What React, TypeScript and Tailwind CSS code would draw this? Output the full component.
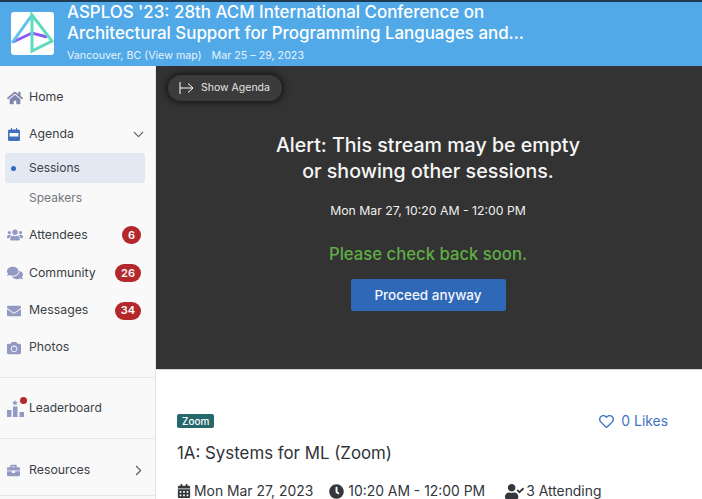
import type { ReactNode } from 'react';
import {
  FaBriefcase,
  FaCalendarAlt,
  FaCamera,
  FaClock,
  FaComments,
  FaEnvelope,
  FaHome,
  FaRegHeart,
  FaUserCheck,
  FaUsers,
} from 'react-icons/fa';
import { ChevronDown, ChevronRight } from 'lucide-react';

const iconColor = 'text-[#929ac4]';

function Logo() {
  return (
    <div className="flex h-[43px] w-[43px] shrink-0 items-center justify-center rounded-[3px] bg-white">
      <svg viewBox="0 0 43 43" className="h-[43px] w-[43px]" fill="none" strokeWidth="3">
        <path d="M2 30 L21 21 L36 25" stroke="#8b5cf6" />
        <path d="M1 31 L21 3" stroke="#5cc4ea" />
        <path d="M21 3 L41 29 L21 39 Z" stroke="#5fdcc0" />
      </svg>
    </div>
  );
}

function AgendaIcon() {
  return (
    <svg viewBox="0 0 12 13" className="h-[13px] w-[12px]">
      <path d="M1.5 1.5 H3 V0 H4 V1.5 H8 V0 H9 V1.5 H10.5 A1.5 1.5 0 0 1 12 3 V11.5 A1.5 1.5 0 0 1 10.5 13 H1.5 A1.5 1.5 0 0 1 0 11.5 V3 A1.5 1.5 0 0 1 1.5 1.5Z" fill="#3f6fbd" />
      <rect x="1.5" y="5" width="9" height="3.5" fill="#f9f9f9" />
    </svg>
  );
}

function NavRow({
  icon,
  label,
  badge,
  right,
  className = 'h-[37px]',
}: {
  icon: ReactNode;
  label: string;
  badge?: string;
  right?: ReactNode;
  className?: string;
}) {
  return (
    <div className={`flex items-center pl-[7px] pr-[14px] ${className}`}>
      <span className={`flex w-[22px] shrink-0 items-center ${iconColor}`}>{icon}</span>
      <span className="text-[12.3px] text-[#3b3f46]">{label}</span>
      <span className="ml-auto flex items-center">
        {badge && (
          <span className="flex h-[18px] min-w-[18px] items-center justify-center rounded-full bg-[#b3292b] px-[6px] text-[11px] font-semibold text-white">
            {badge}
          </span>
        )}
        {right}
      </span>
    </div>
  );
}

function Sidebar() {
  return (
    <aside className="flex w-[156px] shrink-0 flex-col border-r border-[#e6e6e6] bg-[#f9f9f9] pt-[13px]">
      <NavRow icon={<FaHome size={16} className="text-[#7f86ad]" />} label="Home" />
      <NavRow
        icon={<span className="pl-[1px]"><AgendaIcon /></span>}
        label="Agenda"
        right={<ChevronDown size={17} strokeWidth={1.5} className="-mr-[6px] text-[#55585f]" />}
      />
      <div className="ml-[5px] mr-[10px] flex h-[30px] items-center rounded-[3px] bg-[#e2e9f3] pl-[6px]">
        <span className="h-[5px] w-[5px] rounded-full bg-[#3468bb]" />
        <span className="ml-[13px] text-[12px] text-[#3b3f46]">Sessions</span>
      </div>
      <div className="flex h-[33px] items-center pb-[3px] pl-[29px] text-[12px] text-[#74777d]">Speakers</div>
      <NavRow icon={<FaUsers size={16} />} label="Attendees" badge="6" className="h-[38px]" />
      <NavRow icon={<FaComments size={16} />} label="Community" badge="26" className="h-[38px]" />
      <NavRow icon={<FaEnvelope size={14} />} label="Messages" badge="34" />
      <NavRow icon={<FaCamera size={14} />} label="Photos" />
      <div className="mt-[11px] flex h-[62px] items-center border-y border-[#e6e6e6] pl-[7px]">
        <span className="relative mr-[1px] h-[17px] w-[17px] shrink-0">
          <svg viewBox="0 0 17 17" className="h-[17px] w-[17px] fill-[#929ac4]">
            <rect x="0" y="10" width="4.5" height="7" />
            <rect x="6" y="6.5" width="4.5" height="10.5" />
            <rect x="12.5" y="12" width="4.5" height="5" />
            <path d="M8 0 l.9 1.8 1.9 .3 -1.4 1.3 .4 1.9 -1.8-.9 -1.8 .9 .4-1.9 -1.4-1.3 1.9-.3z" />
          </svg>
          <span className="absolute -top-[3px] left-[13px] h-[7px] w-[7px] rounded-full bg-[#b3292b]" />
        </span>
        <span className="ml-[4px] text-[12px] text-[#3b3f46]">Leaderboard</span>
      </div>
      <NavRow
        icon={<FaBriefcase size={13} />}
        label="Resources"
        right={<ChevronRight size={17} strokeWidth={1.5} className="-mr-[6px] text-[#55585f]" />}
        className="h-[57px] border-b border-[#e6e6e6] pt-[6px]"
      />
    </aside>
  );
}

function StreamAlert() {
  return (
    <section className="relative flex h-[303px] shrink-0 flex-col items-center bg-[#333333] pr-[2px] pt-[66px] text-center text-white">
      <button className="absolute left-[12px] top-[9px] flex h-[26px] w-[114px] items-center rounded-full bg-[#3b3b3b] pl-[11px] text-[10.5px] text-[#e4e4e4] shadow-[0_0_6px_2px_rgba(0,0,0,0.55)]">
        <svg viewBox="0 0 15 14" className="mr-[7px] h-[14px] w-[15px]" fill="none" stroke="white" strokeWidth="1">
          <path d="M1 1 V13 M1 7 H14 M9 2.5 L14 7 L9 11.5" />
        </svg>
        Show Agenda
      </button>
      <h2 className="text-[19.6px] font-medium leading-[26px] text-[#f6f6f6]">
        Alert: This stream may be empty
        <br />
        or showing other sessions.
      </h2>
      <p className="mt-[17px] text-[12.25px] leading-[20px] text-[#f0f0f0]">Mon Mar 27, 10:20 AM - 12:00 PM</p>
      <p className="mt-[21px] text-[16.7px] font-medium leading-[24px] text-[#5fae43]">Please check back soon.</p>
      <button className="mt-[13px] h-[32px] w-[155px] rounded-[2px] bg-[#2f68b7] text-[13.5px] font-medium text-[#f2f5fa]">
        Proceed anyway
      </button>
    </section>
  );
}

function SessionDetails() {
  return (
    <section className="flex-1 border-t border-[#d8d8d8] bg-white pl-[21px] pr-[34px] pt-[43px] text-[#33363b]">
      <div className="flex h-[16px] items-center justify-between">
        <span className="rounded-[2px] bg-[#26676b] px-[5px] text-[10px] font-medium leading-[14px] text-white">Zoom</span>
        <span className="flex items-center gap-[7px] text-[13.9px] text-[#3f74c4]">
          <FaRegHeart size={15} />0 Likes
        </span>
      </div>
      <h1 className="mt-[12px] text-[16.85px] leading-[24px] text-[#2f3237]">1A: Systems for ML (Zoom)</h1>
      <div className="mt-[16px] flex items-center text-[13.9px] leading-[20px]">
        <FaCalendarAlt size={14} className="mr-[3px]" />
        <span>Mon Mar 27, 2023</span>
        <FaClock size={15} className="ml-[16px] mr-[4px]" />
        <span>10:20 AM - 12:00 PM</span>
        <FaUserCheck size={19} className="ml-[20px] mr-[2px]" />
        <span>3 Attending</span>
      </div>
    </section>
  );
}

export default function App() {
  return (
    <div className="flex h-[499px] w-[702px] flex-col overflow-hidden bg-white font-['Inter',sans-serif]">
      <header className="flex h-[66px] shrink-0 border-t-2 border-[#1d3a52] bg-[#52a9e8] pl-[11px] text-white">
        <div className="mt-[10px]">
          <Logo />
        </div>
        <div className="ml-[13px]">
          <h1 className="text-[16.9px] font-medium leading-[21px]">
            ASPLOS '23: 28th ACM International Conference on
            <br />
            Architectural Support for Programming Languages and...
          </h1>
          <p className="mt-[5px] text-[10.7px] leading-[14px] text-[#e6f3fc]">
            Vancouver, BC (View map)<span className="ml-[10px]">Mar 25 – 29, 2023</span>
          </p>
        </div>
      </header>
      <div className="flex min-h-0 flex-1">
        <Sidebar />
        <main className="flex min-w-0 flex-1 flex-col">
          <StreamAlert />
          <SessionDetails />
        </main>
      </div>
    </div>
  );
}
